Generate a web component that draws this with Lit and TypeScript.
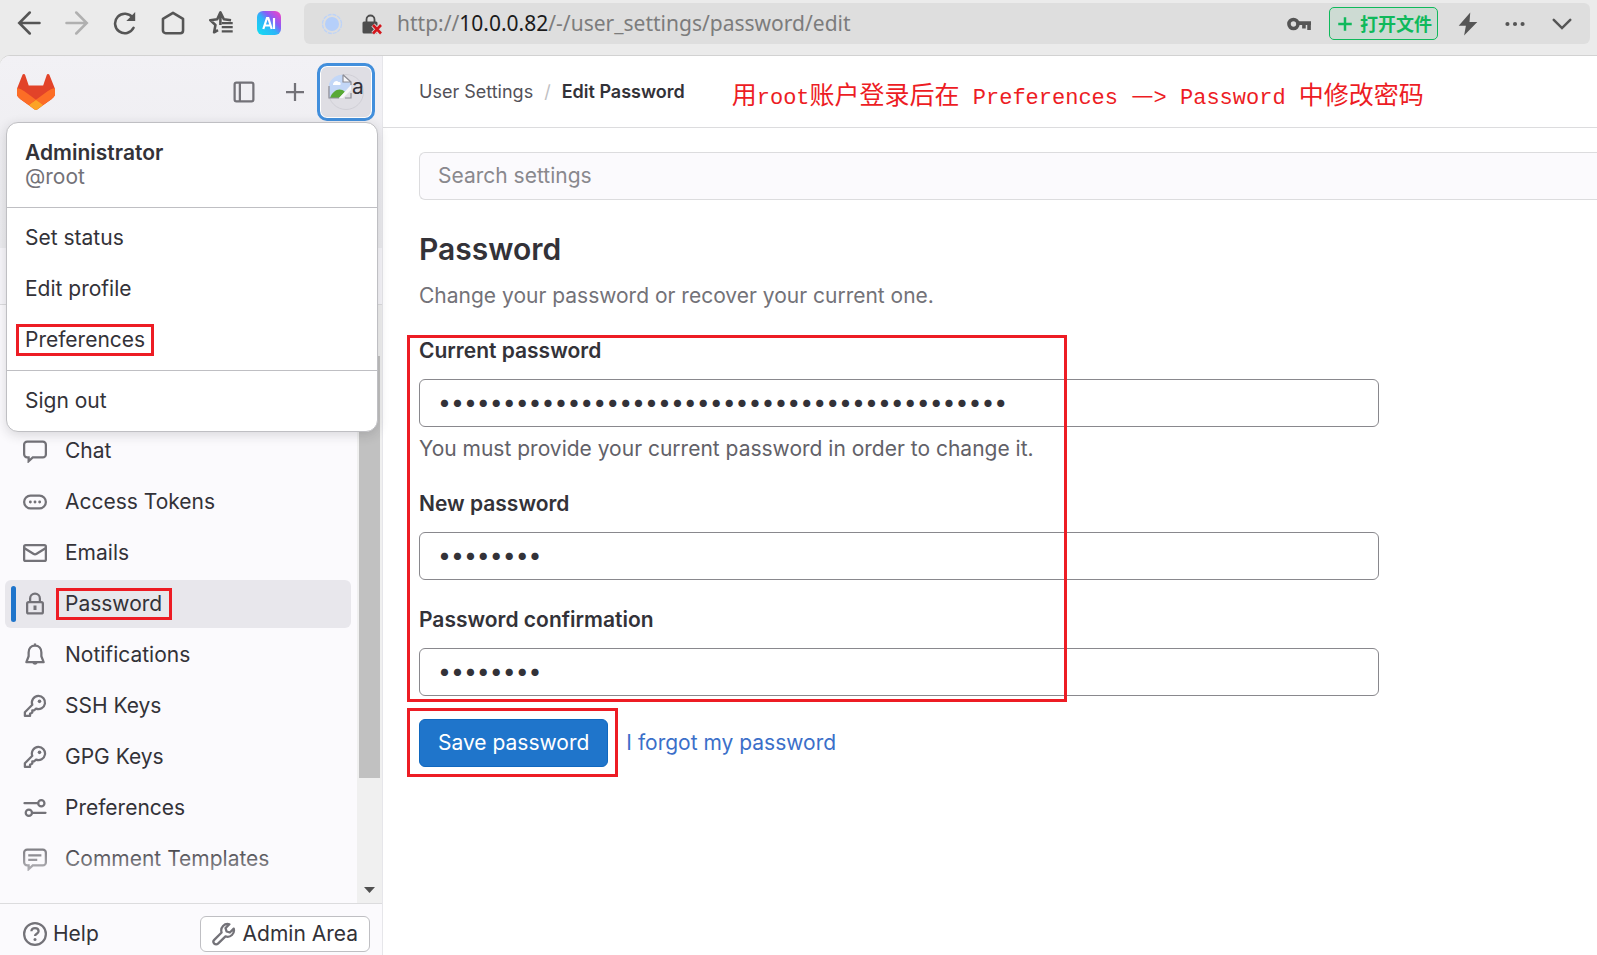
import { LitElement, html, css, svg } from "lit";
import { customElement, property } from "lit/decorators.js";
import { classMap } from "lit/directives/class-map.js";

const icons: Record<string, unknown> = {
  chat: svg`<path d="M2.75 1.75h10.5a2 2 0 0 1 2 2v6.5a2 2 0 0 1-2 2H6.5L3.75 14.8v-2.6h-1a2 2 0 0 1-2-2v-6.5a2 2 0 0 1 2-2Z"/>`,
  token: svg`<rect x=".75" y="3.75" width="14.5" height="8.5" rx="4.25"/><path d="M4.9 8h.01M8 8h.01M11.1 8h.01" stroke-width="1.9" stroke-linecap="round"/>`,
  mail: svg`<rect x=".75" y="2.75" width="14.5" height="10.5" rx="1"/><path d="m1 4.8 5.9 3.7a2 2 0 0 0 2.2 0L15 4.8"/>`,
  lock: svg`<path d="M3.75 6.75h8.5a1 1 0 0 1 1 1v5.5a1 1 0 0 1-1 1h-8.5a1 1 0 0 1-1-1v-5.5a1 1 0 0 1 1-1ZM4.75 6.5V4.25a3.25 3.25 0 0 1 6.5 0V6.500"/><path d="M8 9v3" stroke-width="2"/>`,
  bell: svg`<path d="M8 1.750c2.600 0 4.250 1.900 4.250 4.500v2.600l1.500 3.900H2.250l1.500-3.900v-2.600c0-2.600 1.650-4.500 4.250-4.500Z" stroke-linejoin="round"/><path d="M8 .3v1.500" /><path d="M6.300 13.300a1.800 1.800 0 0 0 3.400 0Z" fill="currentColor" stroke="none"/>`,
  key: svg`<path d="M10.2 1.250a4.400 4.400 0 1 1-1.500 8.500l-1.200 1.100H6.200v1.500L5 13.100H4.700v1.500H1.250v-2.400L6.200 7.200a4.400 4.400 0 0 1 4-5.950Z" stroke-linejoin="round"/><circle cx="11" cy="4.900" r="1.200" fill="currentColor" stroke="none"/>`,
  sliders: svg`<circle cx="12.200" cy="4.800" r="2.100"/><circle cx="3.900" cy="11.200" r="2.100"/><path d="M1 4.800h9.100M6 11.200h9" stroke-linecap="round"/>`,
  comment: svg`<path d="M2.750 1.750h10.500a2 2 0 0 1 2 2v6.500a2 2 0 0 1-2 2H6.500L3.750 14.800v-2.600h-1a2 2 0 0 1-2-2v-6.500a2 2 0 0 1 2-2ZM3.500 5.500h8.750M3.500 8.500h6"/>`,
  help: svg`<circle cx="8" cy="8" r="7.250"/><path d="M5.600 6.200c0-1.300 1-2.200 2.400-2.200s2.400.9 2.400 2.100c0 1.700-2.400 1.700-2.400 3.300"/><circle cx="8" cy="11.700" r="1" fill="currentColor" stroke="none"/>`,
  wrench: svg`<path d="M11.600 1.500A4.300 4.300 0 0 0 6.400 7L1.500 11.900a1.700 1.700 0 0 0 2.500 2.500L9 9.600a4.300 4.300 0 0 0 5.500-5.200L11.900 7 9.700 6.300 9 4.100Z" stroke-linejoin="round"/>`,
  sidebar: svg`<rect x="1.750" y="1.750" width="12.500" height="12.500" rx="1.200"/><path d="M5.250 2v12"/>`,
  plus: svg`<path d="M8 2v12M2 8h12"/>`,
  back: svg`<path d="M15 8H2M8.500 1 1.500 8l7 7" stroke-linecap="round"/>`,
  forward: svg`<path d="M1 8h13M7.500 1l7 7-7 7" stroke-linecap="round"/>`,
  reload: svg`<path d="M13.700 11.200a6.500 6.500 0 1 1-.6-6.800" stroke-linecap="round"/><path d="M14.800.7v6H8.900Z" fill="currentColor" stroke="none"/>`,
  home: svg`<path d="M8 1.200 14.700 5.200v7.800a1.800 1.800 0 0 1-1.800 1.800H3.100A1.800 1.800 0 0 1 1.300 13V5.200Z" stroke-linejoin="round"/>`,
  favorites: svg`<path d="M14.700 6.100 9.900 5.500 7.600.9 5.500 5.500.8 6.100l3.500 3.200-.9 4.900 2.600-1.500M7.600 3v6.300" stroke-linejoin="round"/><path d="M8.500 8h7.300M8.500 10.800h7.300M8.500 13.600h7.300" stroke-width="1.500"/>`,
  passkey: svg`<circle cx="4.300" cy="8" r="3" stroke-width="2.400"/><path d="M7 7.400h9M14.700 7v5M11.300 7v4" stroke-width="2.400"/>`,
  bolt: svg`<path d="M9.500.3 1.800 9.100h4.800L5.400 15.700l8.800-9H9Z" fill="currentColor" stroke="none"/>`,
  more: svg`<g fill="currentColor" stroke="none"><circle cx="2.500" cy="8" r="1.500"/><circle cx="8" cy="8" r="1.500"/><circle cx="13.500" cy="8" r="1.500"/></g>`,
  chevron: svg`<path d="m2.500 5.200 5.500 5.500 5.500-5.500" stroke-linecap="round"/>`,
};

@customElement("ui-icon")
export class UiIcon extends LitElement {
  @property() name = "";

  static styles = css`
    :host { display: inline-flex; flex: none; width: 24px; height: 24px; }
    .glyph { width: 100%; height: 100%; fill: none; stroke: currentColor; stroke-width: var(--stroke, 1.5); }
  `;

  render() {
    return html`<svg class="glyph" viewBox="0 0 16 16" aria-hidden="true">${icons[this.name]}</svg>`;
  }
}

@customElement("browser-bar")
export class BrowserBar extends LitElement {
  static styles = css`
    :host {
      display: flex; align-items: flex-start; box-sizing: border-box; height: 56px; padding: 3px 7px 0 17px;
      background: #ebebeb; color: #555; --stroke: 1.7;
      font-family: "Noto Sans", "Noto Sans CJK SC", sans-serif;
    }
    button { border: 0; padding: 0; background: none; color: inherit; font: inherit; display: inline-flex; align-items: center; }
    .nav { display: flex; align-items: center; gap: 24px; height: 40px; }
    .disabled { color: #b0b0b0; }
    .address {
      display: flex; flex: 1; align-items: center; box-sizing: border-box; height: 41px; margin-left: 23px; padding: 0 16px 0 17px;
      border-radius: 6px; background: #dedede;
    }
    .site { width: 22px; height: 22px; margin-right: 18px; }
    .insecure { width: 22px; height: 22px; margin-right: 14px; }
    .url { flex: 1; padding-bottom: 2px; font-size: 21px; line-height: 32px; color: #7c7c7c; white-space: nowrap; }
    .host { color: #1b1b1b; }
    .tools { display: flex; align-items: center; gap: 18px; }
    .open {
      display: inline-flex; gap: 6px; box-sizing: border-box; height: 33px; padding: 0 5px 0 6px; border: 1px solid #0fb95b; border-radius: 5px;
      background: #cddbd3; color: #0fb95b; font-size: 18px; font-weight: 700; line-height: 30px;
    }
    .open ui-icon { width: 18px; height: 18px; --stroke: 2.2; }
    .more, .chev { margin-left: 6px; }
    .more ui-icon { width: 22px; height: 22px; }
  `;

  render() {
    return html`
      <nav class="nav" aria-label="Browser">
        <button aria-label="Back"><ui-icon name="back"></ui-icon></button>
        <button class="disabled" aria-label="Forward"><ui-icon name="forward"></ui-icon></button>
        <button aria-label="Reload"><ui-icon name="reload"></ui-icon></button>
        <button aria-label="Home"><ui-icon name="home"></ui-icon></button>
        <button aria-label="Favorites"><ui-icon name="favorites"></ui-icon></button>
        <button aria-label="Assistant">
          <svg width="24" height="24" viewBox="0 0 24 24">
            <defs>
              <linearGradient id="ai" x1="0" y1="1" x2="1" y2="0">
                <stop offset="0" stop-color="#10e0f0" /><stop offset=".45" stop-color="#2db4f8" />
                <stop offset=".65" stop-color="#8a5cf6" /><stop offset="1" stop-color="#ff3fc0" />
              </linearGradient>
            </defs>
            <rect width="24" height="24" rx="6" fill="url(#ai)" />
            <path d="m6.300 18 3.700-11h1.300l3.400 11M7.800 14.500h5.500M17 7v11" fill="none" stroke="#fff" stroke-width="2.200" />
          </svg>
        </button>
      </nav>
      <div class="address">
        <svg class="site" viewBox="0 0 22 22">
          <circle cx="11" cy="11" r="9.500" fill="none" stroke="#bdd3f8" stroke-width="1.300" stroke-dasharray="4 1" />
          <circle cx="11" cy="11" r="7" fill="#b5cffa" />
        </svg>
        <svg class="insecure" viewBox="0 0 22 22">
          <path d="M5.500 9V6.500a4 4 0 0 1 8 0V9" fill="none" stroke="#4d4d4d" stroke-width="1.800" />
          <rect x="1.500" y="8.500" width="15" height="12" rx="1.500" fill="#4d4d4d" />
          <path d="m12 12 8 8.500M20 12l-8 8.500" stroke="#dedede" stroke-width="4.500" />
          <path d="m12 12 8 8.500M20 12l-8 8.500" stroke="#d3161c" stroke-width="2.600" />
        </svg>
        <span class="url">http://<span class="host">10.0.0.82</span>/-/user_settings/password/edit</span>
        <div class="tools">
          <button aria-label="Saved passwords"><ui-icon name="passkey"></ui-icon></button>
          <button class="open"><ui-icon name="plus"></ui-icon>打开文件</button>
          <button aria-label="Speed"><ui-icon name="bolt"></ui-icon></button>
          <button class="more" aria-label="More"><ui-icon name="more"></ui-icon></button>
          <button class="chev" aria-label="Expand"><ui-icon name="chevron"></ui-icon></button>
        </div>
      </div>
    `;
  }
}

@customElement("user-menu")
export class UserMenu extends LitElement {
  static styles = css`
    :host {
      display: block; box-sizing: border-box; border: 1px solid #bfbfc3; border-radius: 12px; background: #fff;
      box-shadow: 0 3px 12px rgba(31, 30, 36, 0.16);
    }
    .who { padding: 18px; border-bottom: 1px solid #bfbfc3; line-height: 24px; }
    .name { display: block; font-weight: 600; }
    .handle { display: block; color: #737278; }
    .group { display: grid; gap: 3px; padding: 6px 18px; }
    .group + .group { border-top: 1px solid #bfbfc3; }
    .item { display: flex; align-items: center; height: 48px; color: #333238; text-decoration: none; }
    .marked { position: relative; }
    .marked::after { content: ""; position: absolute; inset: -1px -9px; border: 3px solid #ed1c24; }
  `;

  render() {
    return html`
      <div class="who"><span class="name">Administrator</span><span class="handle">@root</span></div>
      <div class="group">
        <a class="item" href="#status">Set status</a>
        <a class="item" href="#profile">Edit profile</a>
        <a class="item" href="#preferences"><span class="marked">Preferences</span></a>
      </div>
      <div class="group"><a class="item" href="#signout">Sign out</a></div>
    `;
  }
}

interface NavItem {
  icon: string;
  label: string;
  current?: boolean;
}

const navItems: NavItem[] = [
  { icon: "chat", label: "Chat" },
  { icon: "token", label: "Access Tokens" },
  { icon: "mail", label: "Emails" },
  { icon: "lock", label: "Password", current: true },
  { icon: "bell", label: "Notifications" },
  { icon: "key", label: "SSH Keys" },
  { icon: "key", label: "GPG Keys" },
  { icon: "sliders", label: "Preferences" },
  { icon: "comment", label: "Comment Templates" },
];

@customElement("side-bar")
export class SideBar extends LitElement {
  static styles = css`
    :host {
      position: relative; display: flex; flex-direction: column; box-sizing: border-box; width: 383px; flex: none;
      border-right: 1px solid #e6e6ea; border-top-left-radius: 10px; background: #fbfafd; color: #333238;
    }
    button { border: 0; padding: 0; background: none; color: inherit; font: inherit; }
    .top {
      display: flex; align-items: flex-start; box-sizing: border-box; height: 192px; padding: 7px 7px 0 17px;
      border-top-left-radius: 10px; background: linear-gradient(#f2f1f5, #ececef);
    }
    .logo { width: 38px; height: 36px; margin: 11px auto 0 0; }
    .tool { display: flex; align-items: center; height: 58px; color: #737278; }
    .tool + .tool { margin-left: 27px; }
    .avatar {
      display: flex; align-items: center; justify-content: center; box-sizing: border-box; width: 58px; height: 58px; margin-left: 10px;
      border: 3px solid #428fdc; border-radius: 10px; background: #dfdee4; box-shadow: inset 0 0 0 1px #fff;
    }
    .context { height: 56px; border-bottom: 1px solid #dcdcde; background: #f7f6fa; }
    .scroller { position: relative; display: flex; flex: 1; min-height: 0; overflow: hidden; }
    .list { flex: 1; margin: 0; padding: 122px 6px 0 5px; list-style: none; }
    .row { margin-bottom: 3px; }
    .link {
      display: flex; align-items: center; gap: 12px; box-sizing: border-box; height: 48px; padding-left: 6px; border-radius: 6px;
      color: inherit; text-decoration: none;
    }
    .link::before { content: ""; width: 5px; height: 36px; margin-right: -5px; border-radius: 3px; }
    .link ui-icon { color: #737278; margin-right: 6px; }
    .current { background: #e8e7ec; }
    .current::before { background: #1f75cb; }
    .marked { position: relative; }
    .marked::after { content: ""; position: absolute; inset: -1px -10px -1px -9px; border: 3px solid #ed1c24; }
    .fade {
      position: absolute; left: 0; right: 25px; bottom: 0; height: 60px;
      background: linear-gradient(rgba(251, 250, 253, 0), #fbfafd);
    }
    .track { display: flex; flex-direction: column; width: 21px; padding: 51px 2px 10px; background: #f0f0f0; }
    .thumb { height: 422px; background: #c1c1c1; }
    .arrow { width: 11px; height: 6px; margin: auto 5px 0; fill: #505050; }
    .foot {
      display: flex; align-items: center; justify-content: space-between; box-sizing: border-box; height: 52px;
      padding: 9px 12px 0 23px; border-top: 1px solid #dcdcde;
    }
    .help { display: flex; align-items: center; gap: 6px; }
    .help ui-icon, .admin ui-icon { color: #737278; }
    .admin {
      display: flex; align-items: center; gap: 7px; box-sizing: border-box; height: 36px; padding: 0 11px; border: 1px solid #bfbfc3;
      border-radius: 6px; background: #fff; color: inherit; text-decoration: none;
    }
    .menu { position: absolute; z-index: 2; top: 66px; left: 6px; right: 4px; }
  `;

  render() {
    return html`
      <div class="top">
        <svg class="logo" viewBox="0.300 0 24.400 24" preserveAspectRatio="none">
          <path fill="#e24329" d="m24.507 9.500-.034-.09L21.082.562a.896.896 0 0 0-1.694.091l-2.290 7.010H7.825L5.535.653a.898.898 0 0 0-1.694-.09L.451 9.411.416 9.500a6.297 6.297 0 0 0 2.090 7.278l.012.010.03.022 5.160 3.867 2.560 1.935 1.554 1.176a1.051 1.051 0 0 0 1.268 0l1.555-1.176 2.560-1.935 5.197-3.890.014-.010A6.297 6.297 0 0 0 24.507 9.500Z" />
          <path fill="#fc6d26" d="m24.507 9.500-.034-.09a11.440 11.440 0 0 0-4.560 2.051l-7.447 5.632 4.742 3.584 5.197-3.890.014-.010A6.297 6.297 0 0 0 24.507 9.500Z" />
          <path fill="#fca326" d="m7.707 20.677 2.560 1.935 1.555 1.176a1.051 1.051 0 0 0 1.268 0l1.555-1.176 2.560-1.935-4.743-3.584-4.755 3.584Z" />
          <path fill="#fc6d26" d="M5.010 11.461a11.430 11.430 0 0 0-4.560-2.050L.416 9.500a6.297 6.297 0 0 0 2.090 7.278l.012.010.03.022 5.160 3.867 4.745-3.584-7.444-5.632Z" />
        </svg>
        <button class="tool" aria-label="Toggle sidebar"><ui-icon name="sidebar"></ui-icon></button>
        <button class="tool" aria-label="Create new"><ui-icon name="plus"></ui-icon></button>
        <button class="avatar" aria-label="User menu">
          <svg width="36" height="36" viewBox="0 0 36 36">
            <circle cx="18" cy="18" r="17.500" fill="none" stroke="#d0cfd6" />
            <path d="M1 10C3.500 4 9 .8 15 .8v7.200h8v3L11 24H1Z" fill="#c3d7f7" />
            <path d="M5 10c1-3 4-4 5.500-2 2-.5 3 2 1.500 3H5Z" fill="#fff" />
            <path d="M2 24c3-8 10-11 15-6l-6 6Z" fill="#58a936" />
            <path d="M15 .8V8h8ZM23 11v5l-8 8h-4Z" fill="#f7f7fa" />
            <path d="M15 .8V8h8v3M15 .8 23 8M1 12v12h10M17 24h6v-5" fill="none" stroke="#8d8d95" stroke-width="1.200" />
            <text x="24" y="20" font-size="21" fill="#333238">a</text>
          </svg>
        </button>
      </div>
      <div class="context"></div>
      <div class="scroller">
        <ul class="list">
          ${navItems.map(
            (item) => html`<li class="row">
              <a class=${classMap({ link: true, current: !!item.current })} href="#${item.icon}">
                <ui-icon name=${item.icon}></ui-icon>
                <span class=${classMap({ marked: !!item.current })}>${item.label}</span>
              </a>
            </li>`,
          )}
        </ul>
        <div class="fade"></div>
        <div class="track">
          <div class="thumb"></div>
          <svg class="arrow" viewBox="0 0 11 6"><path d="M0 0h11L5.500 6Z" /></svg>
        </div>
      </div>
      <div class="foot">
        <button class="help"><ui-icon name="help"></ui-icon>Help</button>
        <a class="admin" href="#admin"><ui-icon name="wrench"></ui-icon>Admin Area</a>
      </div>
      <user-menu class="menu"></user-menu>
    `;
  }
}

@customElement("password-page")
export class PasswordPage extends LitElement {
  static styles = css`
    :host { display: block; flex: 1; min-width: 0; background: #fff; color: #333238; }
    .crumbs {
      display: flex; align-items: center; box-sizing: border-box; height: 72px; padding-left: 36px;
      border-bottom: 1px solid #dcdcde; font-size: 18px; white-space: nowrap;
    }
    .crumb { color: #535158; text-decoration: none; }
    .sep { margin: 0 11px; color: #bfbfc3; }
    .here { font-weight: 600; }
    .note { margin: 8px 0 0 47px; color: #ed1c24; font: 22px/32px "Liberation Mono", monospace; }
    .han { font: 25px/32px "Noto Sans CJK SC", sans-serif; }
    .body { padding: 24px 0 0 36px; }
    input {
      display: block; box-sizing: border-box; width: 100%; height: 48px; padding: 0 18px 2px; border: 1px solid #89888d; border-radius: 6px;
      background: #fff; color: #333238; font: inherit; outline: 0;
    }
    input[type="password"] { font-size: 23px; }
    .search { border-color: #dcdcde; border-right: 0; border-radius: 6px 0 0 6px; background: #fbfafd; }
    .search::placeholder { color: #89888d; opacity: 1; }
    .title { margin: 31px 0 0; font-size: 30px; font-weight: 600; line-height: 36px; }
    .lead { margin: 14px 0 0; color: #737278; line-height: 30px; }
    .form { max-width: 960px; margin-top: 24px; }
    .fields { position: relative; }
    .field + .field { margin-top: 24px; }
    .label { display: block; padding: 1px 0 13px; font-weight: 600; line-height: 30px; }
    .hint { margin: 7px 0 0; color: #626168; line-height: 30px; }
    .outline { position: absolute; top: 0; bottom: -6px; left: -12px; width: 660px; box-sizing: border-box; border: 3px solid #ed1c24; pointer-events: none; }
    .actions { display: flex; align-items: center; gap: 18px; margin-top: 23px; }
    .save {
      position: relative; box-sizing: border-box; height: 48px; padding: 0 18px; border: 1px solid #1068bf; border-radius: 6px;
      background: #1f75cb; color: #fff; font: inherit;
    }
    .save::after { content: ""; position: absolute; inset: -12px -11px -11px -13px; border: 3px solid #ed1c24; }
    .forgot { color: #3b6fc9; text-decoration: none; }
  `;

  render() {
    return html`
      <nav class="crumbs" aria-label="Breadcrumb">
        <a class="crumb" href="#settings">User Settings</a><span class="sep">/</span><span class="here">Edit Password</span>
        <p class="note"><span class="han">用</span>root<span class="han">账户登录后在</span> Preferences <span class="han">—</span>&gt; Password <span class="han">中修改密码</span></p>
      </nav>
      <main class="body">
        <input class="search" type="search" placeholder="Search settings" aria-label="Search settings" />
        <h1 class="title">Password</h1>
        <p class="lead">Change your password or recover your current one.</p>
        <form class="form">
          <div class="fields">
            <div class="field">
              <label class="label" for="current">Current password</label>
              <input id="current" type="password" .value=${"x".repeat(44)} />
              <p class="hint">You must provide your current password in order to change it.</p>
            </div>
            <div class="field">
              <label class="label" for="fresh">New password</label>
              <input id="fresh" type="password" .value=${"x".repeat(8)} />
            </div>
            <div class="field">
              <label class="label" for="confirm">Password confirmation</label>
              <input id="confirm" type="password" .value=${"x".repeat(8)} />
            </div>
            <div class="outline"></div>
          </div>
          <div class="actions">
            <button class="save" type="button">Save password</button>
            <a class="forgot" href="#forgot">I forgot my password</a>
          </div>
        </form>
      </main>
    `;
  }
}

@customElement("app-root")
export class AppRoot extends LitElement {
  static styles = css`
    :host {
      display: flex; flex-direction: column; height: 100vh; overflow: hidden; background: #ebebeb;
      font: 21px/30px Inter, "Noto Sans CJK SC", sans-serif;
    }
    .page { display: flex; flex: 1; min-height: 0; box-shadow: 0 -1px 0 #d2d2d2; border-top-left-radius: 10px; }
  `;

  render() {
    return html`
      <browser-bar></browser-bar>
      <div class="page"><side-bar></side-bar><password-page></password-page></div>
    `;
  }
}
